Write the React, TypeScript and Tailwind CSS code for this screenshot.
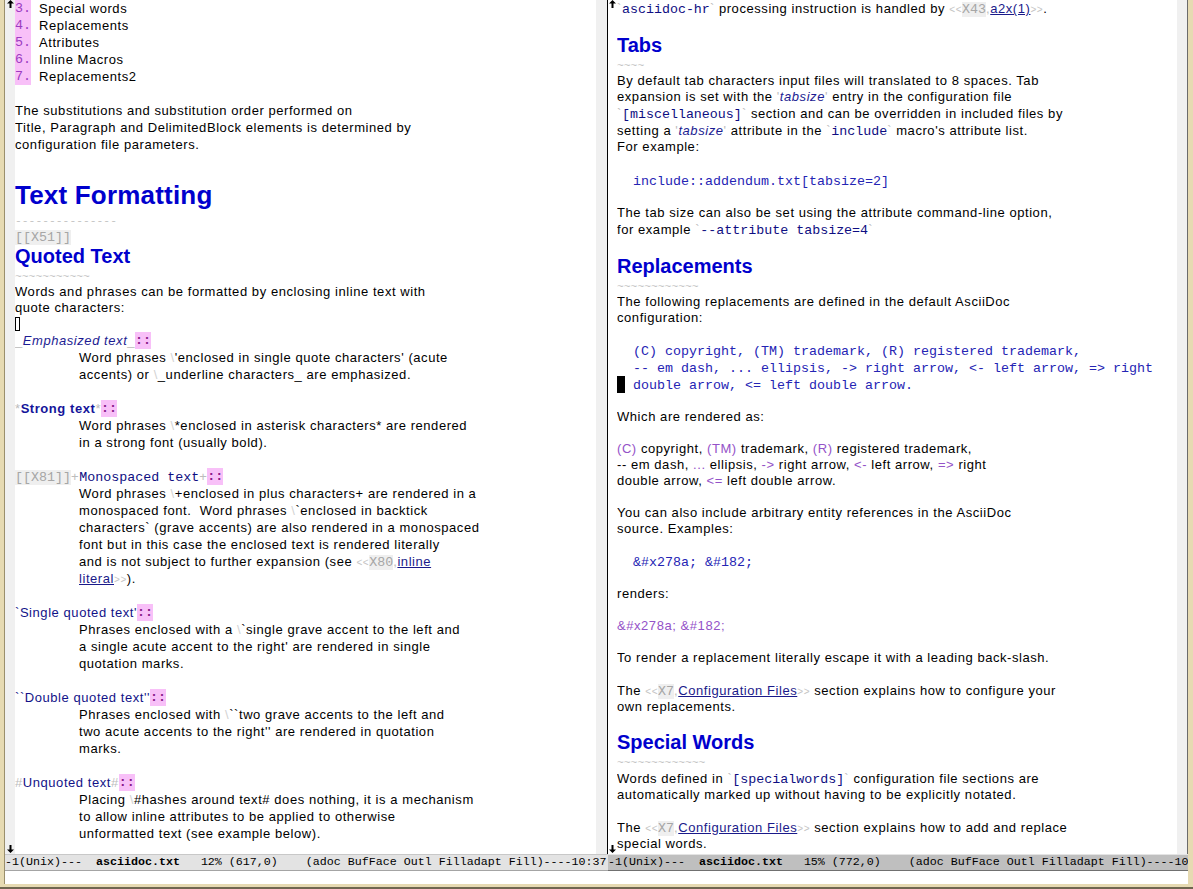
import React from "react";

const SANS = "font-['Liberation_Sans',Arial,sans-serif]";
const MONO = "font-['Liberation_Mono','Courier_New',monospace] tracking-normal";

// line boxes of the emacs buffer
const heights: Record<number, string> = {
  15: "h-[15px] leading-[15px]",
  16: "h-[16px] leading-[16px]",
  17: "h-[17px] leading-[17px]",
};

type Kids = { children?: React.ReactNode };

const Ln = ({ h = 17, ind, children }: { h?: 15 | 16 | 17; ind?: boolean } & Kids) => (
  <div className={`${heights[h]} whitespace-pre ${ind ? "pl-[64px]" : ""}`}>{children}</div>
);

const G = ({ children }: Kids) => <span className="text-[#bcbcbc]">{children}</span>;
const Bs = () => <span className="text-[#d2d2d2]">\</span>;
const Lt = () => <span className="text-[10px] text-[#c4c4c4]">{"<<"}</span>;
const Gt = () => <span className="text-[10px] text-[#c4c4c4]">{">>"}</span>;
const Code = ({ children }: Kids) => (
  <span className={`${MONO} text-[13.33px] text-[#0e0e82]`}>{children}</span>
);
const Lit = ({ children }: Kids) => (
  <span className={`${MONO} text-[13.33px] text-[#2424b4]`}>{children}</span>
);
const Anchor = ({ children }: Kids) => (
  <span className={`${MONO} text-[13.33px] text-[#a6a6a6] bg-[#efefef]`}>{children}</span>
);
const Link = ({ children }: Kids) => <span className="underline text-[#1a1a8a]">{children}</span>;
const R = ({ children }: Kids) => <span className="text-[#9452c8]">{children}</span>;
const Em = ({ children }: Kids) => <span className="italic text-[#1c1c92]">{children}</span>;
const Nv = ({ children }: Kids) => <span className="text-[#121288]">{children}</span>;
const Dc = () => (
  <span className={`${MONO} inline-block h-full align-top text-[13.33px] font-bold text-[#8a1a8a] bg-[#f8c0f8]`}>::</span>
);
const Num = ({ n }: { n: string }) => (
  <>
    <span className={`${MONO} inline-block h-full align-top text-[13.33px] text-[#9b3bc0] bg-[#f8c0f8]`}>{n}</span>
    <span className={`${MONO} text-[13.33px]`}> </span>
  </>
);
const Rule = ({ children }: Kids) => (
  <span className={`${MONO} text-[11.33px] text-[#c4c4c4]`}>{children}</span>
);
const H2 = ({ children }: Kids) => (
  <div className="h-[24px] leading-[24px] text-[20px] font-bold tracking-normal text-[#0000cd]">{children}</div>
);

const Up = () => (
  <svg width="7" height="8" viewBox="0 0 7 8" className="block">
    <path d="M3.5 0L7 3.5H4.5V8H2.5V3.5H0Z" fill="black" />
  </svg>
);
const Down = () => (
  <svg width="7" height="8" viewBox="0 0 7 8" className="block">
    <path d="M3.5 8L7 4.5H4.5V0H2.5V4.5H0Z" fill="black" />
  </svg>
);

const Fringe = ({ cls }: { cls: string }) => (
  <div className={`${cls} flex flex-col justify-between items-center pb-[1px]`}>
    <Up />
    <Down />
  </div>
);

const ModeLine = ({ active, pct }: { active?: boolean; pct: string }) => (
  <div
    className={`h-[17px] leading-[15px] ${MONO} text-[11.67px] text-black whitespace-pre overflow-hidden border-t border-b ${
      active ? "bg-[#bfbfbf] border-t-[#e4e4e4] border-b-[#707070]" : "bg-[#e3e3e3] border-t-[#c8c8c8] border-b-[#a4a4a4]"
    }`}
  >
    {"-1(Unix)---  "}
    <span className="font-bold">asciidoc.txt</span>
    {`   ${pct}    (adoc BufFace Outl Filladapt Fill)----10:37`}
  </div>
);

const LeftBuffer = () => (
  <>
    <Ln><Num n="3." />Special words</Ln>
    <Ln><Num n="4." />Replacements</Ln>
    <Ln><Num n="5." />Attributes</Ln>
    <Ln><Num n="6." />Inline Macros</Ln>
    <Ln><Num n="7." />Replacements2</Ln>
    <Ln />
    <Ln>The substitutions and substitution order performed on</Ln>
    <Ln>Title, Paragraph and DelimitedBlock elements is determined by</Ln>
    <Ln>configuration file parameters.</Ln>
    <Ln />
    <div className="h-[41px] flex items-end">
      <div className="h-[31px] leading-[31px] text-[26px] font-bold tracking-[0.2px] text-[#0000cd]">Text Formatting</div>
    </div>
    <Ln><Rule>---------------</Rule></Ln>
    <Ln><Anchor>[[X51]]</Anchor></Ln>
    <div className="h-[22px] leading-[22px] text-[20px] font-bold tracking-normal text-[#0000cd]">Quoted Text</div>
    <Ln><Rule>~~~~~~~~~~~</Rule></Ln>
    <Ln h={16}>Words and phrases can be formatted by enclosing inline text with</Ln>
    <Ln h={16}>quote characters:</Ln>
    <Ln h={16}>
      <span className="inline-block w-[5px] h-[14px] mt-[1px] border border-black align-top" />
    </Ln>
    <Ln><G>_</G><Em>Emphasized text</Em><G>_</G><Dc /></Ln>
    <Ln ind>Word phrases <Bs />'enclosed in single quote characters' (acute</Ln>
    <Ln ind>accents) or <Bs />_underline characters_ are emphasized.</Ln>
    <Ln />
    <Ln><G>*</G><span className="font-bold text-[#14149a]">Strong text</span><G>*</G><Dc /></Ln>
    <Ln ind>Word phrases <Bs />*enclosed in asterisk characters* are rendered</Ln>
    <Ln ind>in a strong font (usually bold).</Ln>
    <Ln />
    <Ln><Anchor>[[X81]]</Anchor><G>+</G><Code>Monospaced text</Code><G>+</G><Dc /></Ln>
    <Ln ind>Word phrases <Bs />+enclosed in plus characters+ are rendered in a</Ln>
    <Ln ind>monospaced font.  Word phrases <Bs />`enclosed in backtick</Ln>
    <Ln ind>characters` (grave accents) are also rendered in a monospaced</Ln>
    <Ln ind>font but in this case the enclosed text is rendered literally</Ln>
    <Ln ind>and is not subject to further expansion (see <Lt /><Anchor>X80</Anchor><G>,</G><Link>inline</Link></Ln>
    <Ln ind><Link>literal</Link><Gt />).</Ln>
    <Ln />
    <Ln><Nv>`Single quoted text'</Nv><Dc /></Ln>
    <Ln ind>Phrases enclosed with a <Bs />`single grave accent to the left and</Ln>
    <Ln ind>a single acute accent to the right' are rendered in single</Ln>
    <Ln ind>quotation marks.</Ln>
    <Ln />
    <Ln><Nv>``Double quoted text''</Nv><Dc /></Ln>
    <Ln ind>Phrases enclosed with <Bs />``two grave accents to the left and</Ln>
    <Ln ind>two acute accents to the right'' are rendered in quotation</Ln>
    <Ln ind>marks.</Ln>
    <Ln />
    <Ln><G>#</G><Nv>Unquoted text</Nv><G>#</G><Dc /></Ln>
    <Ln ind>Placing <Bs />#hashes around text# does nothing, it is a mechanism</Ln>
    <Ln ind>to allow inline attributes to be applied to otherwise</Ln>
    <Ln ind>unformatted text (see example below).</Ln>
  </>
);

const RightBuffer = () => (
  <>
    <Ln>
      <G>`</G><Code>asciidoc-hr</Code><G>`</G> processing instruction is handled by <Lt /><Anchor>X43</Anchor>
      <G>,</G><Link>a2x(1)</Link><Gt />.
    </Ln>
    <Ln h={16} />
    <H2>Tabs</H2>
    <Ln h={16}><Rule>~~~~</Rule></Ln>
    <Ln h={16}>By default tab characters input files will translated to 8 spaces. Tab</Ln>
    <Ln h={16}>expansion is set with the <G>'</G><Em>tabsize</Em><G>'</G> entry in the configuration file</Ln>
    <Ln><G>`</G><Code>[miscellaneous]</Code><G>`</G> section and can be overridden in included files by</Ln>
    <Ln>setting a <G>'</G><Em>tabsize</Em><G>'</G> attribute in the <G>`</G><Code>include</Code><G>`</G> macro's attribute list.</Ln>
    <Ln h={16}>For example:</Ln>
    <Ln />
    <Ln><Lit>{"  include::addendum.txt[tabsize=2]"}</Lit></Ln>
    <Ln h={16} />
    <Ln h={16}>The tab size can also be set using the attribute command-line option,</Ln>
    <Ln>for example <G>`</G><Code>--attribute tabsize=4</Code><G>`</G></Ln>
    <Ln h={16} />
    <H2>Replacements</H2>
    <Ln h={16}><Rule>~~~~~~~~~~~~</Rule></Ln>
    <Ln h={16}>The following replacements are defined in the default AsciiDoc</Ln>
    <Ln h={16}>configuration:</Ln>
    <Ln h={16} />
    <Ln><Lit>{"  (C) copyright, (TM) trademark, (R) registered trademark,"}</Lit></Ln>
    <Ln><Lit>{"  -- em dash, ... ellipsis, -> right arrow, <- left arrow, => right"}</Lit></Ln>
    <Ln>
      <span className="inline-block w-[8px] h-[17px] bg-black align-top" />
      <Lit>{" double arrow, <= left double arrow."}</Lit>
    </Ln>
    <Ln h={16} />
    <Ln h={16}>Which are rendered as:</Ln>
    <Ln h={16} />
    <Ln h={16}><R>(C)</R> copyright, <R>(TM)</R> trademark, <R>(R)</R> registered trademark,</Ln>
    <Ln h={16}>
      {"-- em dash, "}<R>...</R>{" ellipsis, "}<R>{"->"}</R>{" right arrow, "}<R>{"<-"}</R>{" left arrow, "}
      <R>{"=>"}</R>{" right"}
    </Ln>
    <Ln h={16}>double arrow, <R>{"<="}</R> left double arrow.</Ln>
    <Ln h={16} />
    <Ln h={16}>You can also include arbitrary entity references in the AsciiDoc</Ln>
    <Ln h={16}>source. Examples:</Ln>
    <Ln h={16} />
    <Ln><Lit>{"  &#x278a; &#182;"}</Lit></Ln>
    <Ln h={16} />
    <Ln h={16}>renders:</Ln>
    <Ln h={16} />
    <Ln h={16}><R>{"&#x278a; &#182;"}</R></Ln>
    <Ln h={16} />
    <Ln h={16}>To render a replacement literally escape it with a leading back-slash.</Ln>
    <Ln h={16} />
    <Ln>The <Lt /><Anchor>X7</Anchor><G>,</G><Link>Configuration Files</Link><Gt /> section explains how to configure your</Ln>
    <Ln h={16}>own replacements.</Ln>
    <Ln h={15} />
    <H2>Special Words</H2>
    <Ln h={16}><Rule>~~~~~~~~~~~~~</Rule></Ln>
    <Ln>Words defined in <G>`</G><Code>[specialwords]</Code><G>`</G> configuration file sections are</Ln>
    <Ln h={16}>automatically marked up without having to be explicitly notated.</Ln>
    <Ln h={16} />
    <Ln>The <Lt /><Anchor>X7</Anchor><G>,</G><Link>Configuration Files</Link><Gt /> section explains how to add and replace</Ln>
    <Ln h={16}>special words.</Ln>
  </>
);

export default function App() {
  return (
    <div className={`w-[1193px] h-[889px] bg-[#e6dab2] border-b-2 border-[#6f6650] overflow-hidden ${SANS} text-[13px] tracking-[0.56px] text-black`}>
      <div className="ml-[4px] mr-[5px] h-[884px] border-l border-[#9a8f6c] flex flex-col">
        <div className="flex h-[871px]">
          {/* left window */}
          <div className="w-[603px] flex flex-col">
            <div className="flex h-[854px]">
              <Fringe cls="w-[10px] bg-[#f0f0f0]" />
              <div className="w-[581px] bg-white overflow-hidden">
                <LeftBuffer />
              </div>
              <div className="w-[11px] bg-[#f0f0f0]" />
              <div className="w-px bg-black" />
            </div>
            <ModeLine pct="12% (617,0)" />
          </div>
          {/* right window */}
          <div className="w-[580px] flex flex-col">
            <div className="flex h-[854px]">
              <Fringe cls="w-[9px] bg-white" />
              <div className="w-[560px] bg-white overflow-hidden">
                <RightBuffer />
              </div>
              <div className="w-[10px] bg-[#f0f0f0]" />
              <div className="w-px bg-[#6b6b6b]" />
            </div>
            <ModeLine active pct="15% (772,0)" />
          </div>
        </div>
        <div className="h-[13px] bg-white" />
      </div>
    </div>
  );
}
